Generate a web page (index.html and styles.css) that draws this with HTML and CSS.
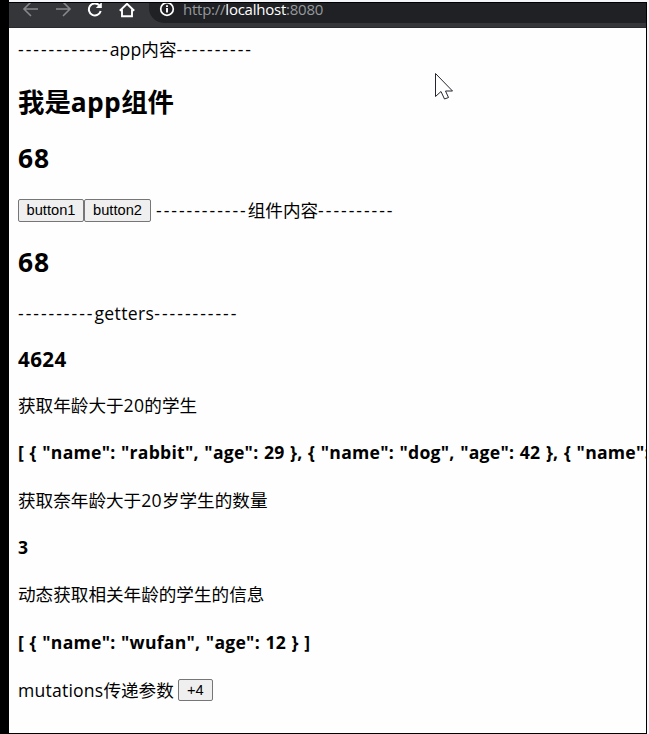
FILE: index.html
```html
<!DOCTYPE html>
<html lang="zh-CN">
<head>
<meta charset="utf-8">
<title>localhost:8080</title>
<link rel="stylesheet" href="styles.css">
</head>
<body>
<div class="window">
  <header class="toolbar">
    <svg class="icons" width="128" height="26" viewBox="0 0 128 26" fill="none">
      <path d="M29 6H15.500M22 -1L15 6L22 13" stroke="#86888b" stroke-width="1.6"/>
      <path d="M47 6H60.500M54 -1L61 6L54 13" stroke="#86888b" stroke-width="1.6"/>
      <path d="M90.2 2.2A6 6 0 1 0 91.7 8" stroke="#fff" stroke-width="2"/>
      <path d="M92.8-1V5H86.8Z" fill="#fff"/>
      <path d="M110.8 7.8L118 .8L125.200 7.800M113 6.500V13.200H123V6.500" stroke="#fff" stroke-width="1.900"/>
    </svg>
    <div class="address">
      <svg width="16" height="16" viewBox="0 0 16 16" fill="none">
        <circle cx="8" cy="8" r="6.300" stroke="#fff" stroke-width="1.700"/>
        <path d="M8 7V11.500M8 4.300V6" stroke="#fff" stroke-width="1.900"/>
      </svg>
      <span class="url">http://<b>localhost</b>:8080</span>
    </div>
  </header>
  <main class="page">
    <div class="row first"><span class="rule">------------</span><span class="latin">app</span>内容<span class="rule">----------</span></div>
    <h2 class="row title">我是<span class="title-latin">app</span>组件</h2>
    <h2 class="row count">68</h2>
    <div class="row controls"><button>button1</button><button>button2</button><span class="rule after">------------</span>组件内容<span class="rule">----------</span></div>
    <h2 class="row count second">68</h2>
    <div class="row getters"><span class="rule">----------</span><span class="latin">getters</span><span class="rule">-----------</span></div>
    <h3 class="row square">4624</h3>
    <div class="row older">获取年龄大于<span class="digits">20</span>的学生</div>
    <h4 class="row json">[ { "name": "rabbit", "age": 29 }, { "name": "dog", "age": 42 }, { "name":</h4>
    <div class="row amount">获取奈年龄大于<span class="digits">20</span>岁学生的数量</div>
    <h4 class="row json total">3</h4>
    <div class="row lookup">动态获取相关年龄的学生的信息</div>
    <h4 class="row json match">[ { "name": "wufan", "age": 12 } ]</h4>
    <div class="row mutation"><span class="mutation-label">mutations</span>传递参数<button class="plus">+4</button></div>
  </main>
  <svg class="cursor" width="20" height="30" viewBox="0 0 20 30"><path d="M1.500 1.500V24.500L7 19.500L10.500 27L14.500 25.500L11.500 19H18.500Z" fill="#fff" stroke="#25252d"/></svg>
</div>
</body>
</html>
```
FILE: styles.css
```css
* { box-sizing: border-box; }
body {
  margin: 0;
  height: 734px;
  overflow: hidden;
  padding: 2px 2px 0 0;
  background: linear-gradient(90deg, #000 9px, #f3f5f8 9px);
  font: 17.6px/30px "Open Sans", "Noto Sans CJK SC", sans-serif;
  color: #000;
}
.window {
  position: relative;
  width: 647px;
  height: 732px;
  overflow: hidden;
  background: #fefefe;
  border: solid #000;
  border-width: 1px 1px 1px 9px;
}
.toolbar {
  display: flex;
  height: 25px;
  background: #35363a;
  border-bottom: 1px solid #292a2d;
}
.icons { flex: none; margin-right: 12px; }
.address {
  display: flex;
  align-items: center;
  flex: 1;
  height: 20px;
  padding: 0 0 8px 10px;
  background: #202124;
  border-radius: 0 0 0 15px;
}
.url {
  margin-left: 8px;
  font-size: 15px;
  line-height: 20px;
  color: #96999d;
  letter-spacing: -.24px;
}
.url b { color: #fff; font-weight: 400; }
.page { padding-left: 9px; }
.row {
  display: flex;
  align-items: center;
  height: 30px;
  margin: 0;
  white-space: pre;
  font-weight: 400;
}
.rule { letter-spacing: 1.98px; }
.latin { letter-spacing: .1px; }
.getters .latin { letter-spacing: .35px; }
.digits { letter-spacing: .3px; }
.mutation-label { letter-spacing: .2px; }
h2.row, h3.row, h4.row { font-weight: 700; }
h2.row { font-size: 26.4px; }
h3.row { font-size: 20.6px; letter-spacing: .4px; }
h4.row { font-size: 17.6px; }
.first { margin-top: 6px; }
.title { position: relative; top: -1px; margin-top: 24px; }
.title-latin { letter-spacing: .35px; }
.count { margin-top: 25px; letter-spacing: .8px; }
.controls { margin-top: 22px; }
.count.second { margin-top: 22px; }
.getters { margin-top: 21px; }
.square, .older { margin-top: 16px; }
.json { margin-top: 17px; letter-spacing: .25px; word-spacing: .7px; }
.amount { margin-top: 18px; }
.total, .lookup { margin-top: 17px; }
.match, .mutation { margin-top: 18px; }
button {
  width: 66px;
  height: 23px;
  padding: 0;
  border: 1px solid #767676;
  border-radius: 2px;
  background: #efefef;
  color: #000;
  font: 14.67px/20px "Liberation Sans", sans-serif;
}
button + button { width: 67px; }
.after { margin-left: 5px; }
.plus { width: 35px; height: 22px; margin-left: 4px; }
.cursor { position: absolute; left: 425px; top: 69px; }
```
